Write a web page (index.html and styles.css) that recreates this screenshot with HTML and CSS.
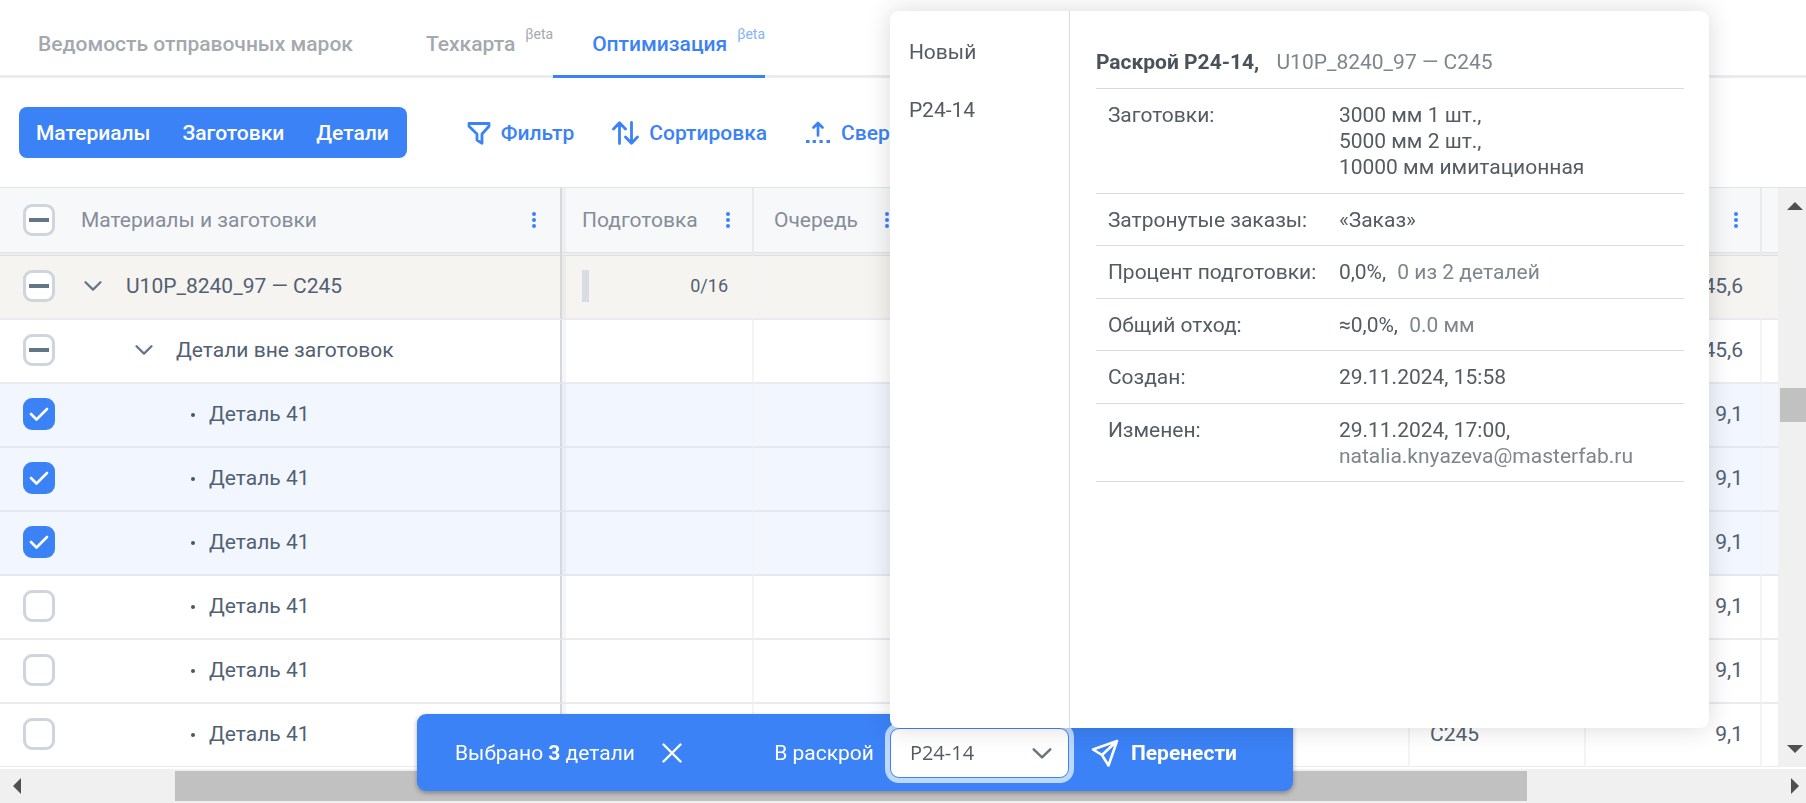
FILE: index.html
```html
<!DOCTYPE html>
<html lang="ru">
<head>
<meta charset="utf-8">
<title>Оптимизация</title>
<link rel="stylesheet" href="styles.css">
</head>
<body>
<svg class="defs" aria-hidden="true">
  <symbol id="chevron" viewBox="0 0 18 10"><path d="M1.5 1.2 9 8.6l7.500-7.400" fill="none" stroke="currentColor" stroke-width="2.200" stroke-linecap="round" stroke-linejoin="round"/></symbol>
  <symbol id="dots" viewBox="0 0 4 16"><circle cx="2" cy="2" r="2"/><circle cx="2" cy="8" r="2"/><circle cx="2" cy="14" r="2"/></symbol>
</svg>
<div class="page">
  <nav class="tabs">
    <a class="tab" href="#list">Ведомость отправочных марок</a>
    <a class="tab tab-beta" href="#card">Техкарта<sup>βeta</sup></a>
    <a class="tab tab-beta active" href="#opt">Оптимизация<sup>βeta</sup></a>
  </nav>

  <div class="toolbar">
    <div class="segment">
      <button type="button">Материалы</button><button type="button">Заготовки</button><button type="button">Детали</button>
    </div>
    <div class="tools">
      <button type="button" class="tool">
        <svg width="24" height="24" viewBox="0 0 24 24"><path d="M2 2.500h20v2.800l-7 7.700v9.300l-5-3.300v-6L2 5.300z" fill="none" stroke="currentColor" stroke-width="2.800" stroke-linejoin="round"/></svg>
        Фильтр</button>
      <button type="button" class="tool">
        <svg width="27" height="24" viewBox="0 0 27 24"><path d="M7.500 22.500V2M1.500 8l6-6.300 6 6.300M19.500 1.500V22M13.500 16l6 6.300 6-6.300" fill="none" stroke="currentColor" stroke-width="2.800" stroke-linecap="round" stroke-linejoin="round"/></svg>
        Сортировка</button>
      <button type="button" class="tool">
        <svg width="26" height="24" viewBox="0 0 26 24"><path d="M13 14.500V2.500M8.500 6.500 13 2l4.500 4.500" fill="none" stroke="currentColor" stroke-width="2.700" stroke-linecap="round" stroke-linejoin="round"/><path d="M1 20.500h3.500M7.700 20.500h3.200M14.500 20.500h3.200M21.500 20.500H25" stroke="currentColor" stroke-width="3"/></svg>
        Свернуть</button>
    </div>
  </div>

  <div class="grid">
    <table class="table">
      <colgroup><col class="c-name"><col class="c-prep"><col class="c-queue"><col><col class="c-num"><col class="c-num"><col class="c-end"></colgroup>
      <thead>
        <tr>
          <th class="pin"><div class="cell"><span class="box mixed"><input type="checkbox" aria-label="Выбрать всё"></span><span class="grow">Материалы и заготовки</span><svg class="dots"><use href="#dots"/></svg></div></th>
          <th><div class="cell prep"><span class="grow">Подготовка</span><svg class="dots"><use href="#dots"/></svg></div></th>
          <th><div class="cell"><span class="grow">Очередь</span><svg class="dots"><use href="#dots"/></svg></div></th>
          <th></th><th></th>
          <th><div class="cell end"><svg class="dots"><use href="#dots"/></svg></div></th>
          <th></th>
        </tr>
      </thead>
      <tbody>
        <tr class="group">
          <td class="pin"><label class="cell"><span class="box mixed"><input type="checkbox"></span><svg class="chev"><use href="#chevron"/></svg>U10P_8240_97 — C245</label></td>
          <td><div class="cell prep"><span class="progress"></span><span class="ratio">0/16</span></div></td>
          <td></td><td></td><td></td><td class="num">345,6</td><td></td>
        </tr>
        <tr>
          <td class="pin"><label class="cell level2"><span class="box mixed"><input type="checkbox"></span><svg class="chev"><use href="#chevron"/></svg>Детали вне заготовок</label></td>
          <td></td><td></td><td></td><td></td><td class="num">345,6</td><td></td>
        </tr>
        <tr class="selected">
          <td class="pin"><label class="cell leaf"><span class="box"><input type="checkbox" checked><svg viewBox="0 0 20 16"><path d="M2 8l5.500 5.500L18 3"/></svg></span><i></i>Деталь 41</label></td>
          <td></td><td></td><td></td><td>C245</td><td class="num">9,1</td><td></td>
        </tr>
        <tr class="selected">
          <td class="pin"><label class="cell leaf"><span class="box"><input type="checkbox" checked><svg viewBox="0 0 20 16"><path d="M2 8l5.500 5.500L18 3"/></svg></span><i></i>Деталь 41</label></td>
          <td></td><td></td><td></td><td>C245</td><td class="num">9,1</td><td></td>
        </tr>
        <tr class="selected">
          <td class="pin"><label class="cell leaf"><span class="box"><input type="checkbox" checked><svg viewBox="0 0 20 16"><path d="M2 8l5.500 5.500L18 3"/></svg></span><i></i>Деталь 41</label></td>
          <td></td><td></td><td></td><td>C245</td><td class="num">9,1</td><td></td>
        </tr>
        <tr>
          <td class="pin"><label class="cell leaf"><span class="box"><input type="checkbox"></span><i></i>Деталь 41</label></td>
          <td></td><td></td><td></td><td>C245</td><td class="num">9,1</td><td></td>
        </tr>
        <tr>
          <td class="pin"><label class="cell leaf"><span class="box"><input type="checkbox"></span><i></i>Деталь 41</label></td>
          <td></td><td></td><td></td><td>C245</td><td class="num">9,1</td><td></td>
        </tr>
        <tr>
          <td class="pin"><label class="cell leaf"><span class="box"><input type="checkbox"></span><i></i>Деталь 41</label></td>
          <td></td><td></td><td></td><td>C245</td><td class="num">9,1</td><td></td>
        </tr>
      </tbody>
    </table>
    <div class="vscroll">
      <svg width="16" height="8" viewBox="0 0 16 8"><path d="M0 8 8 0l8 8z"/></svg>
      <div class="vtrack"><span class="gap-before"></span><span class="thumb"></span><span class="gap-after"></span></div>
      <svg width="16" height="8" viewBox="0 0 16 8"><path d="M0 0h16L8 8z"/></svg>
    </div>
  </div>

  <div class="hscroll">
    <svg width="8" height="16" viewBox="0 0 8 16"><path d="M8 0v16L0 8z"/></svg>
    <div class="htrack"><span class="gap-before"></span><span class="thumb"></span><span class="gap-after"></span></div>
    <svg width="8" height="16" viewBox="0 0 8 16"><path d="M0 0v16l8-8z"/></svg>
  </div>
</div>

<div class="actions">
  <span>Выбрано <b>3</b> детали</span>
  <button type="button" class="close" aria-label="Сбросить выбор"><svg width="20" height="20" viewBox="0 0 20 20"><path d="M1.500 1.500l17 17M18.500 1.500l-17 17" stroke="currentColor" stroke-width="2.400" stroke-linecap="round"/></svg></button>
  <label class="cut-label" for="cut">В раскрой</label>
  <div class="picker">
    <select id="cut"><option>P24-14</option></select>
    <svg class="arrow"><use href="#chevron"/></svg>
    <div class="popup">
      <div class="options">
        <button type="button">Новый</button>
        <button type="button">P24-14</button>
      </div>
      <div class="details">
        <h2><b>Раскрой P24-14,</b> <span>U10P_8240_97 — C245</span></h2>
        <dl>
          <div><dt>Заготовки:</dt><dd>3000 мм 1 шт.,<br>5000 мм 2 шт.,<br>10000 мм имитационная</dd></div>
          <div><dt>Затронутые заказы:</dt><dd>«Заказ»</dd></div>
          <div><dt>Процент подготовки:</dt><dd>0,0%, <span>0 из 2 деталей</span></dd></div>
          <div><dt>Общий отход:</dt><dd>≈0,0%, <span>0.0 мм</span></dd></div>
          <div><dt>Создан:</dt><dd>29.11.2024, 15:58</dd></div>
          <div><dt>Изменен:</dt><dd>29.11.2024, 17:00,<br><em>natalia.knyazeva@masterfab.ru</em></dd></div>
        </dl>
      </div>
    </div>
  </div>
  <button type="button" class="move"><svg width="28" height="28" viewBox="0 0 28 28"><path d="M26 2 2 10.500l9 5.500 6.500 10.500zM26 2 11 16" fill="none" stroke="currentColor" stroke-width="2.600" stroke-linejoin="round" stroke-linecap="round"/></svg>Перенести</button>
</div>
</body>
</html>
```

FILE: styles.css
```css
* { box-sizing: border-box; }
body {
  margin: 0;
  font-family: Roboto, "Noto Sans", sans-serif;
  font-size: 21px;
  line-height: 26px;
  color: #526072;
  background: #fff;
}
button, select { font: inherit; color: inherit; background: none; border: 0; padding: 0; margin: 0; }
.defs { display: block; width: 0; height: 0; }
.page { display: flex; flex-direction: column; height: 100vh; overflow: hidden; }

/* tabs */
.tabs { display: flex; height: 78px; flex: none; box-shadow: inset 0 -3px #ebecef; }
.tab {
  display: flex;
  align-items: center;
  padding: 10px 35px 0 38px;
  font-weight: 500;
  color: #a4a9ae;
  text-decoration: none;
  white-space: nowrap;
}
.tab-beta { padding-right: 0; }
.tab sup { align-self: flex-start; margin-left: 10px; padding-top: 12px; font-size: 14px; line-height: 24px; font-weight: 400; }
.active { color: #3b82f6; border-bottom: 3px solid #3b82f6; padding-top: 13px; padding-left: 39px; }
.active sup { color: #86b3f9; padding-top: 9px; }

/* toolbar */
.toolbar { display: flex; align-items: center; gap: 60px; flex: none; height: 109px; padding: 0 19px; }
.segment { display: flex; height: 51px; padding: 0 1px; background: #3b82f6; border-radius: 8px; color: #fff; font-weight: 500; }
.segment button { padding: 0 16px; }
.segment button:last-child { padding-right: 17px; }
.tools { display: flex; gap: 38px; color: #3b82f6; font-weight: 500; }
.tool { display: flex; align-items: center; gap: 10px; }

/* table */
.grid { display: flex; flex: 1; min-height: 0; border-top: 1px solid #e0e4e9; }
.table { flex: 1; width: 0; table-layout: fixed; border-collapse: separate; border-spacing: 0; align-self: flex-start; }
.c-name { width: 562px; }
.c-prep { width: 192px; }
.c-queue { width: 159px; }
.c-num { width: 176px; }
.c-end { width: 16px; }
th { height: 68px; padding: 0 0 4px; font-weight: 400; text-align: left; color: #858d9b; background: #f7f8fa; border-right: 2px solid #e8eaee; box-shadow: inset 0 -1px #e0e0df, inset 0 -3px #eceef0, inset 0 -4px #dfe3ec; }
td { height: 64px; padding: 0 0 2px 20px; border-right: 2px solid #f4f4f7; border-bottom: 2px solid #eaebf0; }
td:last-child, th:last-child { border-right: 0; }
.pin { padding-left: 0; border-right: 2px solid #d5d9de; }
.pin + td, .pin + th { background-image: linear-gradient(90deg, #00000009 4px, transparent 4px); }
.cell { display: flex; align-items: center; padding: 0 22px 0 20px; white-space: nowrap; }
td .cell { padding-left: 0; }
.pin .cell { padding: 0 24px 0 23px; }
.pin .grow { padding-left: 26px; }
.grow { flex: 1; }
.end { justify-content: flex-end; }
.dots { width: 4px; height: 16px; fill: #3b82f6; }
.group td { background-color: #f6f4f0; }
.selected td { background-color: #f2f7ff; border-bottom-color: #e4e8f1; }
td.num { padding-right: 17px; text-align: right; }
.progress { width: 7px; height: 32px; background: #d9dce2; }
.ratio { margin: 0 2px 0 auto; font-size: 18px; }
.chev { width: 18px; height: 10px; margin: 0 24px 0 29px; color: #64748b; }
.level2 .chev { margin-left: 80px; margin-right: 23px; }
.leaf i { width: 4px; height: 4px; margin: 2px 14px 0 136px; border-radius: 2px; background: #475569; }
.box { position: relative; display: block; width: 32px; height: 32px; }
.box input { appearance: none; display: block; width: 32px; height: 32px; margin: 0; border: 3px solid #cfd5dc; border-radius: 9px; background: #fff; }
.box input:checked { background: #3b82f6; border-color: #3b82f6; }
.box svg { position: absolute; left: 6px; top: 8px; width: 20px; height: 16px; fill: none; stroke: #fff; stroke-width: 2.600; stroke-linecap: round; stroke-linejoin: round; }
.mixed::after { content: ""; position: absolute; left: 6px; top: 14px; width: 20px; height: 4px; background: #64748b; }

/* scrollbars */
.vscroll { display: flex; flex-direction: column; align-items: center; width: 28px; padding: 14px 0; padding-left: 6px; background: #f0f0f0; fill: #505050; }
.vscroll svg, .hscroll svg { flex: none; }
.vtrack { display: flex; flex: 1; flex-direction: column; align-self: stretch; margin-left: -4px; }
.vtrack .gap-before { flex: 178; }
.vtrack .thumb { flex: 34; }
.vtrack .gap-after { flex: 323; }
.thumb { background: #c1c1c1; }
.hscroll { display: flex; align-items: center; flex: none; height: 36px; padding: 2px 7px 2px 13px; border-top: 2px solid #fff; background: #f0f0f0; fill: #505050; }
.htrack { display: flex; flex: 1; align-self: stretch; }
.htrack .gap-before { flex: 154; }
.htrack .thumb { flex: 1352; }
.htrack .gap-after { flex: 264; }

/* selection bar */
.actions {
  position: fixed;
  left: 417px;
  bottom: 12px;
  display: flex;
  align-items: center;
  width: 876px;
  height: 77px;
  padding-left: 38px;
  border-radius: 9px;
  background: #3b82f6;
  color: #fff;
  box-shadow: 0 2px 5px #00000055;
  white-space: nowrap;
}
.actions b { font-weight: 700; }
.close { display: flex; margin-left: 27px; }
.cut-label { margin-left: auto; }
.picker { position: relative; width: 179px; height: 50px; margin: 0 22px 0 16px; color: #555b62; }
.picker select { appearance: none; width: 100%; height: 50px; padding: 0 19px; border: 1px solid #3b82f6; border-radius: 9px; background: #fff; outline: 5px solid #bdd8fd; font-family: "Open Sans", "Noto Sans", sans-serif; font-size: 20px; }
.arrow { position: absolute; right: 17px; top: 20px; width: 20px; height: 11px; color: #6b737b; }
.move { display: flex; align-items: center; gap: 12px; margin-right: 56px; font-weight: 700; }

/* cutting plan popup */
.popup {
  position: absolute;
  left: 0;
  bottom: 100%;
  display: flex;
  width: 819px;
  height: 717px;
  border-radius: 9px;
  background: #fff;
  box-shadow: 0 0 26px #00000026;
}
.options { display: flex; flex-direction: column; width: 180px; padding-top: 12px; border-right: 1px solid #d9dbdf; }
.options button { height: 58px; padding-left: 19px; text-align: left; }
.details { flex: 1; padding: 38px 25px 0 26px; }
.details h2 { margin: 0; padding-bottom: 13px; border-bottom: 1px solid #d9dbdf; font-size: 21px; font-weight: 400; }
.details b { color: #4b5158; }
.details span { margin-left: 6px; }
.details h2 span { margin-left: 12px; }
.details span, .details em { color: #7d858d; font-style: normal; }
dl { margin: 0; }
dl div { display: flex; padding: 13px 0 13px 12px; border-bottom: 1px solid #d9dbdf; }
dl div:nth-child(even) { padding-bottom: 12px; }
dt { width: 231px; }
dd { margin: 0; }
```
